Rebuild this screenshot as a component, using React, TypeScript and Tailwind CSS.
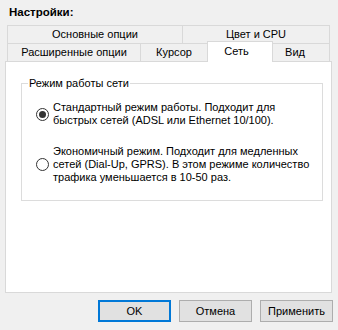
import React from 'react';

const Radio: React.FC<{ checked?: boolean }> = ({ checked }) => (
  <svg width="13" height="13" viewBox="0 0 13 13" className="shrink-0">
    <circle cx="6.5" cy="6.5" r="6" fill="#ffffff" stroke="#333333" strokeWidth="1" />
    {checked && <circle cx="6.5" cy="6.5" r="3.5" fill="#333333" />}
  </svg>
);

export default function App() {
  return (
    <div className="w-[338px] h-[330px] bg-[#f0f0f0] text-black text-[11px] font-['Liberation_Sans',Arial,sans-serif] flex flex-col select-none">
      {/* Title */}
      <div className="h-[25px] pl-[9px] flex items-center font-bold text-[11.5px]">Настройки:</div>

      {/* Tabs, two rows */}
      <div className="ml-[7px] w-[323px]">
        <div className="flex h-[18px]">
          <div className="w-[175px] h-[18px] border-t border-l border-[#d9d9d9] flex items-center justify-center">
            Основные опции
          </div>
          <div className="w-[148px] h-[18px] border-t border-l border-r border-[#d9d9d9] flex items-center justify-center">
            Цвет и CPU
          </div>
        </div>
        <div className="flex items-start h-[18px]">
          <div className="w-[133px] h-[18px] border-t border-l border-[#d9d9d9] flex items-center justify-center">
            Расширенные опции
          </div>
          <div className="w-[67px] h-[18px] border-t border-l border-[#d9d9d9] flex items-center justify-center">
            Курсор
          </div>
          <div className="relative z-10 w-[66px] h-[21px] -mt-[2px] bg-white border-t border-l border-r border-[#d9d9d9] flex items-center justify-center pr-[7px] pb-[1px]">
            Сеть
          </div>
          <div className="w-[57px] h-[18px] border-t border-r border-[#d9d9d9] flex items-center justify-center pr-[12px]">
            Вид
          </div>
        </div>
      </div>

      {/* Tab page */}
      <div className="ml-[5px] w-[327px] h-[232px] bg-white border border-[#d9d9d9] pl-[15px] pt-[14px]">
        <fieldset className="w-[302px] h-[125px] border border-[#dcdcdc]">
          <legend className="ml-[6px] px-[1px] leading-[14px]">Режим работы сети</legend>
          <div className="mt-[11px] ml-[14px] flex items-center gap-[4px]">
            <Radio checked />
            <div className="leading-[13px] whitespace-nowrap">
              Стандартный режим работы. Подходит для
              <br />
              быстрых сетей (ADSL или Ethernet 10/100).
            </div>
          </div>
          <div className="mt-[18px] ml-[14px] flex items-center gap-[4px]">
            <Radio />
            <div className="leading-[13px] whitespace-nowrap">
              Экономичный режим. Подходит для медленных
              <br />
              сетей (Dial-Up, GPRS). В этом режиме количество
              <br />
              трафика уменьшается в 10-50 раз.
            </div>
          </div>
        </fieldset>
      </div>

      {/* Dialog buttons */}
      <div className="mt-[7px] pr-[5px] flex justify-end gap-[8px]">
        <button className="w-[73px] h-[22px] bg-[#e1e1e1] border-2 border-[#0078d7] flex items-center justify-center">
          OK
        </button>
        <button className="w-[73px] h-[22px] bg-[#e1e1e1] border border-[#adadad] flex items-center justify-center">
          Отмена
        </button>
        <button className="w-[73px] h-[22px] bg-[#e1e1e1] border border-[#adadad] flex items-center justify-center">
          Применить
        </button>
      </div>
    </div>
  );
}
